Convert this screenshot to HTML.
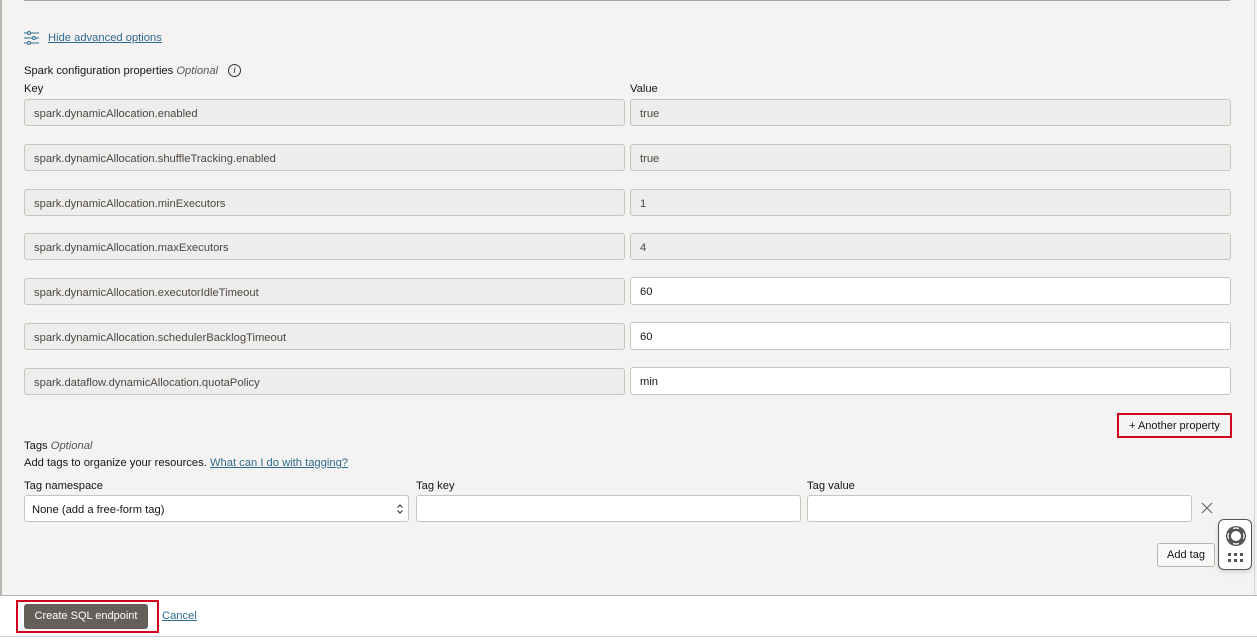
<!DOCTYPE html>
<html><head><style>
*{box-sizing:border-box;margin:0;padding:0}
body{width:1257px;height:640px;background:#f4f3f1;font-family:"Liberation Sans",sans-serif;font-size:11.2px;color:#161513;position:relative;overflow:hidden}
.a{position:absolute}
.in{position:absolute;height:27px;border:1px solid #c8c4c0;border-radius:3px;background:#efedeb;padding-left:9px;line-height:28px;font-size:11.2px;color:#4a4744}
.w{background:#fff;color:#161513}
.lnk{color:#2f6b8f;text-decoration:underline}
.lbl{position:absolute;font-size:11.2px;color:#161513}
</style></head><body>
<div class="a" style="left:0;top:0;width:2px;height:596px;background:#b9b6b2"></div>
<div class="a" style="left:24px;top:0;width:1206px;height:1px;background:#a8a5a1"></div>
<div class="a" style="left:1254px;top:0;width:1px;height:596px;background:#d6d3cf"></div>
<svg class="a" style="left:24px;top:31px" width="16" height="14" viewBox="0 0 16 14" fill="none" stroke="#2f6b8f" stroke-width="1"><line x1="0" y1="2" x2="3" y2="2"/><circle cx="5" cy="2" r="1.5"/><line x1="7" y1="2" x2="15" y2="2"/><line x1="0" y1="7" x2="8" y2="7"/><circle cx="10" cy="7" r="1.5"/><line x1="12" y1="7" x2="15" y2="7"/><line x1="0" y1="12" x2="3" y2="12"/><circle cx="5" cy="12" r="1.5"/><line x1="7" y1="12" x2="15" y2="12"/></svg>
<div class="a lnk" style="left:48px;top:32px">Hide advanced options</div>
<div class="lbl" style="left:24px;top:65px">Spark configuration properties <i style="color:#555">Optional</i></div>
<div class="a" style="left:228px;top:64px;width:13px;height:13px;border:1px solid #333;border-radius:50%;font-size:9px;text-align:center;line-height:11px;font-style:italic">i</div>
<div class="lbl" style="left:24px;top:83px">Key</div>
<div class="lbl" style="left:630px;top:83px">Value</div>

<div class="in" style="left:24px;top:99px;width:601px">spark.dynamicAllocation.enabled</div>
<div class="in" style="left:630px;top:99px;width:601px">true</div>
<div class="in" style="left:24px;top:144px;width:601px">spark.dynamicAllocation.shuffleTracking.enabled</div>
<div class="in" style="left:630px;top:144px;width:601px">true</div>
<div class="in" style="left:24px;top:189px;width:601px">spark.dynamicAllocation.minExecutors</div>
<div class="in" style="left:630px;top:189px;width:601px">1</div>
<div class="in" style="left:24px;top:233px;width:601px">spark.dynamicAllocation.maxExecutors</div>
<div class="in" style="left:630px;top:233px;width:601px">4</div>
<div class="in" style="left:24px;top:278px;width:601px">spark.dynamicAllocation.executorIdleTimeout</div>
<div class="in w" style="left:630px;top:277px;width:601px;height:28px">60</div>
<div class="in" style="left:24px;top:323px;width:601px">spark.dynamicAllocation.schedulerBacklogTimeout</div>
<div class="in w" style="left:630px;top:322px;width:601px;height:28px">60</div>
<div class="in" style="left:24px;top:368px;width:601px">spark.dataflow.dynamicAllocation.quotaPolicy</div>
<div class="in w" style="left:630px;top:367px;width:601px;height:28px">min</div>

<div class="a" style="left:1117px;top:413px;width:115px;height:25px;border:2px solid #d0021b;background:#f4f3f1;text-align:center;line-height:22px;font-size:11px">+ Another property</div>

<div class="lbl" style="left:24px;top:440px">Tags <i style="color:#555">Optional</i></div>
<div class="lbl" style="left:24px;top:457px">Add tags to organize your resources. <span class="lnk">What can I do with tagging?</span></div>
<div class="lbl" style="left:24px;top:480px">Tag namespace</div>
<div class="lbl" style="left:416px;top:480px">Tag key</div>
<div class="lbl" style="left:807px;top:480px">Tag value</div>
<div class="in w" style="left:24px;top:495px;width:385px;color:#161513;padding-left:7px">None (add a free-form tag)
<svg style="position:absolute;right:4px;top:7px" width="8" height="12" viewBox="0 0 8 12" fill="none" stroke="#444" stroke-width="1.2"><path d="M1.5 4.5L4 2l2.5 2.5M1.5 7.5L4 10l2.5-2.5"/></svg></div>
<div class="in w" style="left:416px;top:495px;width:385px"></div>
<div class="in w" style="left:807px;top:495px;width:385px"></div>
<svg class="a" style="left:1201px;top:502px" width="12" height="12" viewBox="0 0 12 12" stroke="#666" stroke-width="1.1"><path d="M1 1L11 11M11 1L1 11"/></svg>

<div class="a" style="left:1157px;top:543px;width:58px;height:24px;border:1px solid #b9b6b2;border-radius:3px;background:#f9f8f7;text-align:center;line-height:23px;font-size:11px">Add tag</div>
<div class="a" style="left:1218px;top:519px;width:34px;height:51px;border:1px solid #555;border-radius:6px;background:#fff;box-shadow:0 2px 5px rgba(0,0,0,.15)">
<svg style="position:absolute;left:5px;top:4px" width="24" height="24" viewBox="0 0 24 24"><circle cx="12" cy="12" r="10" fill="#555"/><circle cx="12" cy="12" r="5" fill="#fff"/><circle cx="12" cy="12" r="8" fill="none" stroke="#fff" stroke-width="1.2" stroke-dasharray="6 6.5" stroke-dashoffset="3"/></svg>
<div style="position:absolute;left:8px;top:32px;width:18px;font-size:0">
<svg width="18" height="12"><g fill="#555"><rect x="1" y="1" width="3" height="3"/><rect x="7" y="1" width="3" height="3"/><rect x="13" y="1" width="3" height="3"/><rect x="1" y="7" width="3" height="3"/><rect x="7" y="7" width="3" height="3"/><rect x="13" y="7" width="3" height="3"/></g></svg></div>
</div>

<div class="a" style="left:0;top:595px;width:1257px;height:45px;background:#fff;border-top:1px solid #b9b6b2"></div>
<div class="a" style="left:0;top:636px;width:1257px;height:1px;background:#ccc"></div>
<div class="a" style="left:16px;top:600px;width:143px;height:33px;border:2px solid #d0021b"></div>
<div class="a" style="left:24px;top:604px;width:124px;height:25px;background:#655f5a;border-radius:3px;color:#fff;text-align:center;line-height:25px;font-size:11px">Create SQL endpoint</div>
<div class="a lnk" style="left:162px;top:610px">Cancel</div>
</body></html>
